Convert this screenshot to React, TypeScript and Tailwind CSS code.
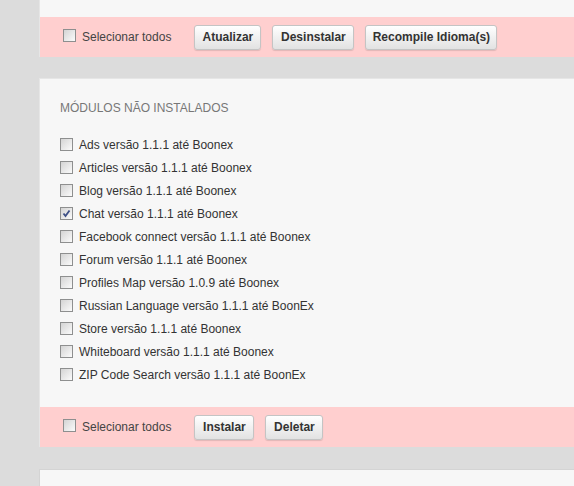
import React from 'react';

const modules = [
  { name: 'Ads versão 1.1.1 até Boonex', checked: false },
  { name: 'Articles versão 1.1.1 até Boonex', checked: false },
  { name: 'Blog versão 1.1.1 até Boonex', checked: false },
  { name: 'Chat versão 1.1.1 até Boonex', checked: true },
  { name: 'Facebook connect versão 1.1.1 até Boonex', checked: false },
  { name: 'Forum versão 1.1.1 até Boonex', checked: false },
  { name: 'Profiles Map versão 1.0.9 até Boonex', checked: false },
  { name: 'Russian Language versão 1.1.1 até BoonEx', checked: false },
  { name: 'Store versão 1.1.1 até Boonex', checked: false },
  { name: 'Whiteboard versão 1.1.1 até Boonex', checked: false },
  { name: 'ZIP Code Search versão 1.1.1 até BoonEx', checked: false },
];

function Checkbox({ checked = false }: { checked?: boolean }) {
  return (
    <span className="relative flex h-[13px] w-[13px] shrink-0 items-center justify-center border border-[#8e8f8f] bg-gradient-to-br from-[#d4d4d4] to-[#fbfbfb]">
      {checked && (
        <svg viewBox="0 0 11 11" className="h-[11px] w-[11px]">
          <path d="M2.5 5.5 L4.5 8 L8.5 2.5" fill="none" stroke="#3d4f86" strokeWidth={1.8} />
        </svg>
      )}
    </span>
  );
}

function Button({ label, width }: { label: string; width: string }) {
  return (
    <button
      className={`${width} h-[25px] rounded-[3px] border border-[#c4c4c4] bg-gradient-to-b from-[#ffffff] to-[#e2e2e2] text-center text-[12px] font-bold text-[#333] shadow-[0_1px_1px_rgba(0,0,0,0.12)]`}
    >
      {label}
    </button>
  );
}

function ActionBar({ buttons }: { buttons: { label: string; width: string }[] }) {
  return (
    <div className="flex h-[40px] items-center bg-[#ffcfcf] pl-[23px]">
      <div className="flex items-center">
        <span className="-mt-[3px]">
          <Checkbox />
        </span>
        <span className="ml-[6px] text-[12px] text-[#444]">Selecionar todos</span>
      </div>
      <div className="ml-[23px] flex items-center gap-[11px]">
        {buttons.map((b) => (
          <Button key={b.label} label={b.label} width={b.width} />
        ))}
      </div>
    </div>
  );
}

export default function App() {
  return (
    <div
      className="h-[486px] w-[574px] overflow-hidden bg-[#dcdcdc] pl-[39px]"
      style={{ fontFamily: '"Liberation Sans", Arial, sans-serif' }}
    >
      <div className="border-l border-[#e6e6e6] bg-[#f7f7f7]">
        <div className="h-[17px]" />
        <ActionBar
          buttons={[
            { label: 'Atualizar', width: 'w-[67px]' },
            { label: 'Desinstalar', width: 'w-[82px]' },
            { label: 'Recompile Idioma(s)', width: 'w-[132px]' },
          ]}
        />
      </div>

      <div className="mt-[21px] border-l border-t border-[#e6e6e6] bg-[#f7f7f7]">
        <div className="px-[20px] pt-[21px] pb-[21px]">
          <h2 className="text-[12px] leading-[16px] text-[#777]">MÓDULOS NÃO INSTALADOS</h2>
          <ul className="mt-[17px]">
            {modules.map((m) => (
              <li key={m.name} className="flex h-[23px] items-center">
                <Checkbox checked={m.checked} />
                <span className="ml-[6px] text-[12px] text-[#333]">{m.name}</span>
              </li>
            ))}
          </ul>
        </div>
        <ActionBar
          buttons={[
            { label: 'Instalar', width: 'w-[60px]' },
            { label: 'Deletar', width: 'w-[58px]' },
          ]}
        />
      </div>

      <div className="mt-[22px] h-[40px] border-l border-t border-[#d4d4d4] bg-[#f7f7f7]" />
    </div>
  );
}
